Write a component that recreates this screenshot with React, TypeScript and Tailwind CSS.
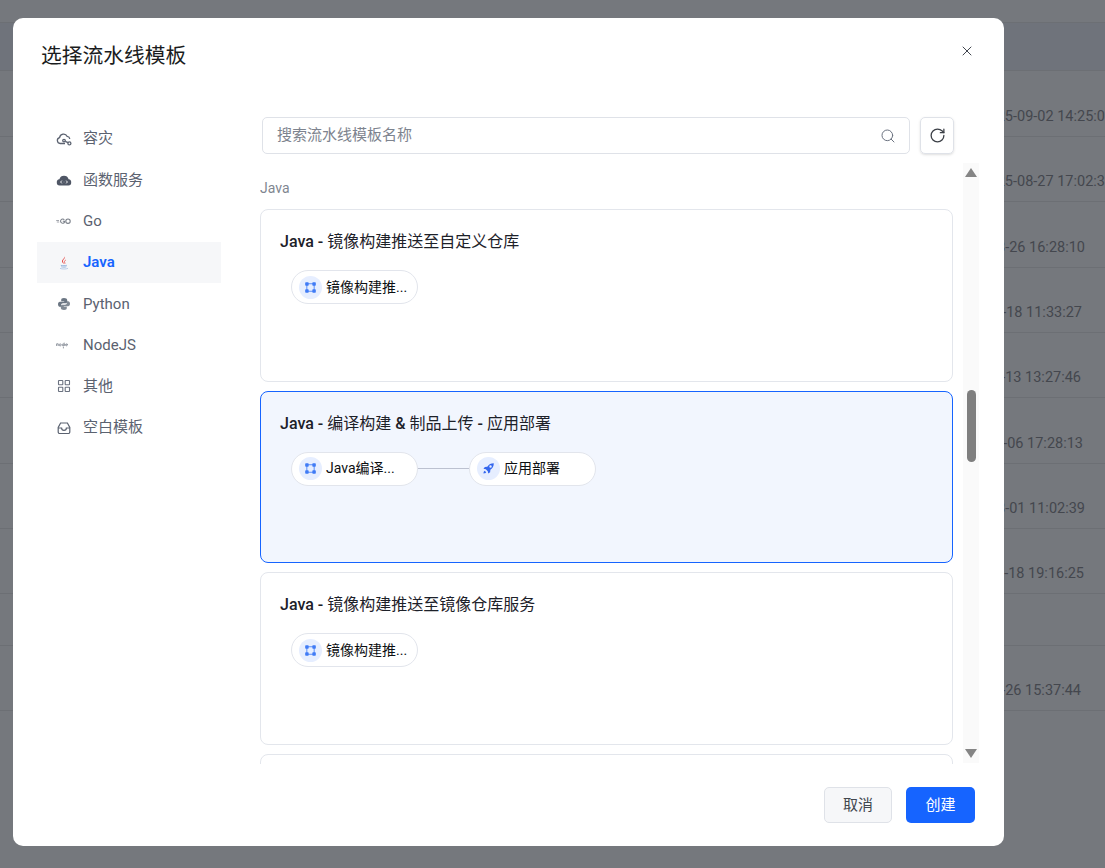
import React from "react";
import { Search, RotateCw, X } from "lucide-react";

const font = "font-['Roboto','Noto_Sans_CJK_SC',sans-serif]";

const bgRows = [
  { h: "h-[66px]", t: "25-09-02 14:25:0", pr: "pr-0" },
  { h: "h-[65px]", t: "25-08-27 17:02:3", pr: "pr-0" },
  { h: "h-[66px]", t: "08-26 16:28:10", pr: "pr-[20px]" },
  { h: "h-[65px]", t: "08-18 11:33:27", pr: "pr-[23px]" },
  { h: "h-[65px]", t: "08-13 13:27:46", pr: "pr-[24px]" },
  { h: "h-[66px]", t: "08-06 17:28:13", pr: "pr-[22px]" },
  { h: "h-[65px]", t: "08-01 11:02:39", pr: "pr-[20px]" },
  { h: "h-[65px]", t: "07-18 19:16:25", pr: "pr-[21px]" },
  { h: "h-[52px]", t: "", pr: "pr-0" },
  { h: "h-[65px]", t: "06-26 15:37:44", pr: "pr-[24px]" },
];

function CloudLink() {
  return (
    <svg viewBox="0 0 16 16" className="w-4 h-4" fill="none" stroke="#5b6270" strokeWidth="1.3">
      <path d="M9 12.5H4.2A3 3 0 0 1 3.6 6.6 4 4 0 0 1 11.2 5.4 3 3 0 0 1 13.8 8" />
      <circle cx="8" cy="9.6" r="1.3" />
      <circle cx="13.4" cy="12.4" r="1.5" />
      <path d="M9.2 10.3 12 11.6" />
    </svg>
  );
}
function CloudFn() {
  return (
    <svg viewBox="0 0 16 16" className="w-4 h-4">
      <path d="M3.800 13.500A2.900 2.900 0 0 1 .8 10.500 3 3 0 0 1 3.400 7.300 4.800 4.800 0 0 1 12.600 7.300 3 3 0 0 1 15.200 10.500 2.900 2.900 0 0 1 12.200 13.500Z" fill="#4f5665" />
      <path d="M5.800 8.600 4.600 10l1.200 1.400M10.200 8.600 11.400 10l-1.200 1.400M7.400 10h.2M8.600 10h.2" stroke="#fff" strokeWidth=".9" fill="none" />
    </svg>
  );
}
function GoIcon() {
  return (
    <svg viewBox="0 0 16 16" className="w-4 h-4" fill="none" stroke="#7b808a" strokeWidth="1.1">
      <path d="M.2 7.500h2.800M.8 9h2.400" strokeWidth=".7" />
      <path d="M8.300 6.800A2.100 2.100 0 1 0 8.600 9V8.300H6.800" />
      <circle cx="12" cy="8.200" r="2.200" />
    </svg>
  );
}
function JavaIcon() {
  return (
    <svg viewBox="0 0 16 16" className="w-4 h-4" fill="none">
      <path d="M8.800 1.500C9.600 3.400 6.600 4.600 7 6.600c.2.900.9 1.600 1 2.400-.8-.7-2.300-1.700-1.900-3.200C6.500 4.200 8.500 3.400 8.800 1.500Z" fill="#e3342f" />
      <path d="M9.800 5c-1 .6-1.600 1.100-1.200 2.200.1.500.5 1 .3 1.600" stroke="#e3342f" strokeWidth=".7" />
      <path d="M4.800 10.300c1.800.5 4.600.5 6 0M5.200 11.800c1.600.4 4 .4 5.200 0" stroke="#7fa4d6" strokeWidth=".8" />
      <path d="M4 13.400c2.200.8 6 .8 8 0" stroke="#a9c2e4" strokeWidth=".8" />
    </svg>
  );
}
function PythonIcon() {
  return (
    <svg viewBox="0 0 16 16" className="w-4 h-4" fill="#6b7683">
      <path d="M8 2C5.800 2 5.200 2.900 5.200 4v1.300H8.200v.5H3.900C2.700 5.800 2 6.800 2 8.200s.7 2.600 1.900 2.600h1.100V9.300c0-1.100.9-2 2-2h2.800c.9 0 1.400-.7 1.400-1.500V4C11.200 2.800 10 2 8 2Z" />
      <path d="M8 14c2.200 0 2.800-.9 2.800-2v-1.300H7.800v-.5h4.300c1.200 0 1.900-1 1.900-2.400s-.7-2.600-1.900-2.600H11v1.500c0 1.100-.9 2-2 2H6.200c-.9 0-1.400.7-1.400 1.500V12C4.800 13.200 6 14 8 14Z" opacity=".85" />
    </svg>
  );
}
function NodeIcon() {
  return (
    <svg viewBox="0 0 16 16" className="w-4 h-4" fill="none" stroke="#6b7280" strokeWidth=".7">
      <path d="M.6 9V6.800h1.600V9M3.200 7.900a1 1 0 1 0 2 0 1 1 0 1 0-2 0M8.200 5.600V9M8.200 7.900a1 1 0 1 1-2 0 1 1 0 1 1 2 0M9.600 7.900h2M11.600 7.900a1 1 0 1 0-.4.800" />
      <path d="M7.400 9.800v1.600" />
    </svg>
  );
}
function GridIcon() {
  return (
    <svg viewBox="0 0 14 14" className="w-[14px] h-[14px]" fill="none" stroke="#6b7280" strokeWidth="1.100">
      <rect x="1.500" y="1.500" width="4.300" height="4.300" rx=".5" />
      <rect x="8.200" y="1.500" width="4.300" height="4.300" rx=".5" />
      <rect x="1.500" y="8.200" width="4.300" height="4.300" rx=".5" />
      <rect x="8.200" y="8.200" width="4.300" height="4.300" rx=".5" />
    </svg>
  );
}
function TrayIcon() {
  return (
    <svg viewBox="0 0 14 14" className="w-[14px] h-[14px]" fill="none" stroke="#5b6270" strokeWidth="1.200">
      <path d="M3.600 2h6.800l2.400 4.500V11a1.500 1.500 0 0 1-1.500 1.500H2.700A1.500 1.500 0 0 1 1.200 11V6.500Z" />
      <path d="M1.200 7h3.400a2.400 2.400 0 0 0 4.800 0h3.400" />
    </svg>
  );
}
function Flow({ className = "" }: { className?: string }) {
  return (
    <svg viewBox="0 0 12 12" className={className} fill="none">
      <path d="M2 2h8M2 10h8M2 2v8M10 2v8" stroke="#5b8ff9" strokeWidth="1.100" />
      <rect x=".2" y=".2" width="3.800" height="3.800" rx=".8" fill="#3f7bf6" />
      <rect x="8" y=".2" width="3.800" height="3.800" rx=".8" fill="#3f7bf6" />
      <rect x=".2" y="8" width="3.800" height="3.800" rx=".8" fill="#3f7bf6" />
      <rect x="8" y="8" width="3.800" height="3.800" rx=".8" fill="#3f7bf6" />
    </svg>
  );
}
function Rocket({ className = "" }: { className?: string }) {
  return (
    <svg viewBox="0 0 16 16" className={className} fill="#3366ee">
      <path d="M14.500 1.500c-3.500 0-6 1.300-8 4.200L3.500 6 1.800 8.300l2.900.6 2.400 2.400.6 2.900 2.300-1.700.3-3c2.900-2 4.200-4.500 4.200-8ZM10.500 7a1.500 1.500 0 1 1 0-3 1.500 1.500 0 0 1 0 3Z" />
      <path d="M3.300 10.800c-1 .6-1.400 1.800-1.500 3.400 1.600-.1 2.800-.5 3.400-1.500Z" />
    </svg>
  );
}

const menu: { label: string; icon: React.ReactNode; active?: boolean }[] = [
  { label: "容灾", icon: <CloudLink /> },
  { label: "函数服务", icon: <CloudFn /> },
  { label: "Go", icon: <GoIcon /> },
  { label: "Java", icon: <JavaIcon />, active: true },
  { label: "Python", icon: <PythonIcon /> },
  { label: "NodeJS", icon: <NodeIcon /> },
  { label: "其他", icon: <GridIcon /> },
  { label: "空白模板", icon: <TrayIcon /> },
];

function Pill({ label, rocket }: { label: string; rocket?: boolean }) {
  return (
    <div className="w-[127px] h-[34px] rounded-[17px] border border-[#e2e5ec] bg-white flex items-center pl-[7px] shrink-0">
      <span className="w-[23px] h-[23px] rounded-full bg-[#e6eeff] flex items-center justify-center shrink-0">
        {rocket ? <Rocket className="w-[13px] h-[13px]" /> : <Flow className="w-[11px] h-[11px]" />}
      </span>
      <span className="ml-[4px] text-[14px] text-[#0d0f12] whitespace-nowrap">{label}</span>
    </div>
  );
}

function Title({ text }: { text: string }) {
  const parts = text.match(/[\x00-\x7f]+|[^\x00-\x7f]+/g) ?? [];
  return (
    <div className="text-[16px] leading-[22px] text-[#1d2129]">
      {parts.map((p, i) => (
        <span key={i} className={/[\x00-\x7f]/.test(p) ? "font-medium" : "font-normal"}>
          {p}
        </span>
      ))}
    </div>
  );
}

function Card({ title, selected, children }: { title?: string; selected?: boolean; children?: React.ReactNode }) {
  return (
    <div className={`h-[172.500px] shrink-0 rounded-[8px] border pt-[21px] pl-[19px] ${selected ? "border-[#1664ff] bg-[#f2f6fe]" : "border-[#e3e6ec] bg-white"}`}>
      {title && <Title text={title} />}
      {children && <div className="mt-[17px] ml-[11px] flex items-center">{children}</div>}
    </div>
  );
}

export default function App() {
  return (
    <div className={`relative w-[1105px] h-[868px] overflow-hidden bg-[#75787d] ${font}`}>
      <div className="pt-[22px]">
        <div className="h-[49px] bg-[#6f737b] border-y border-[#6c6f74]" />
        {bgRows.map((r, i) => (
          <div key={i} className={`${r.h} border-b border-[#6c6f74] flex items-end justify-end pb-[10px] ${r.pr}`}>
            <span className="text-[14.500px] leading-[18px] text-[#44474e] whitespace-nowrap">{r.t}</span>
          </div>
        ))}
      </div>

      <div className="absolute left-[13px] top-[18px] w-[991px] h-[828px] rounded-[10px] bg-white flex flex-col">
        <div className="h-[74px] shrink-0 flex items-start justify-between pl-[28px] pr-[29px] pt-[22px]">
          <div className="text-[20.750px] leading-[32px] text-[#1a1c20]">选择流水线模板</div>
          <X className="w-[16px] h-[16px] mt-[3px] text-[#41464f]" strokeWidth={1.5} />
        </div>
        <div className="flex flex-1 min-h-0 pt-[24.500px]">
          <div className="w-[184px] ml-[24px] mt-[1.500px] shrink-0 flex flex-col">
            {menu.map((m) => (
              <div key={m.label} className={`h-[41.300px] flex items-center pl-[19px] text-[15px] ${m.active ? "bg-[#f6f7f9] text-[#1664ff] font-semibold" : "text-[#5b6270]"}`}>
                <span className="w-[16px] h-[16px] flex items-center justify-center shrink-0">{m.icon}</span>
                <span className="ml-[11px]">{m.label}</span>
              </div>
            ))}
          </div>
          <div className="ml-[39px] w-[719px] flex flex-col min-h-0">
            <div className="flex pl-[2px] w-[694px]">
              <div className="w-[648px] h-[37px] rounded-[5px] border border-[#dfe2e8] flex items-center justify-between pl-[14px] pr-[13px]">
                <span className="text-[15px] text-[#7d838e]">搜索流水线模板名称</span>
                <Search className="w-[16px] h-[16px] text-[#6b7280] mt-[1px]" strokeWidth={1.5} />
              </div>
              <div className="ml-[10px] w-[34px] h-[37px] rounded-[5px] border border-[#dfe2e8] shadow-sm flex items-center justify-center">
                <RotateCw className="w-[17px] h-[17px] text-[#3b3f46]" strokeWidth={1.800} />
              </div>
            </div>
            <div className="flex flex-1 min-h-0 mt-[11px]">
              <div className="w-[694px] h-[599px] overflow-hidden flex flex-col gap-[9px]">
                <div className="text-[14px] leading-[20px] mt-[13px] mb-[2.500px] text-[#808690]">Java</div>
                <Card title="Java - 镜像构建推送至自定义仓库"><Pill label="镜像构建推..." /></Card>
                <Card title="Java - 编译构建 & 制品上传 - 应用部署" selected>
                  <Pill label="Java编译..." />
                  <div className="w-[51px] h-px bg-[#bcc1d0]" />
                  <Pill label="应用部署" rocket />
                </Card>
                <Card title="Java - 镜像构建推送至镜像仓库服务"><Pill label="镜像构建推..." /></Card>
                <Card />
              </div>
              <div className="relative ml-[10px] -mt-[2px] w-[16px] h-[600px] bg-[#fafafa] flex flex-col items-center">
                <div className="mt-[5px] w-0 h-0 border-x-[6px] border-x-transparent border-b-[9px] border-b-[#858585]" />
                <div className="absolute left-[4px] top-[227px] w-[9px] h-[72px] rounded-[5px] bg-[#7f7f7f]" />
                <div className="mt-auto mb-[5px] w-0 h-0 border-x-[6px] border-x-transparent border-t-[9px] border-t-[#858585]" />
              </div>
            </div>
          </div>
        </div>
        <div className="h-[82px] shrink-0 flex justify-end items-start pt-[23px] pr-[29px] gap-[14px]">
          <button className="w-[68px] h-[36px] rounded-[5px] border border-[#dfe2e8] bg-[#f6f7f9] text-[15px] text-[#41464f]">取消</button>
          <button className="w-[69px] h-[36px] rounded-[5px] bg-[#1664ff] text-[15px] text-white">创建</button>
        </div>
      </div>
    </div>
  );
}
